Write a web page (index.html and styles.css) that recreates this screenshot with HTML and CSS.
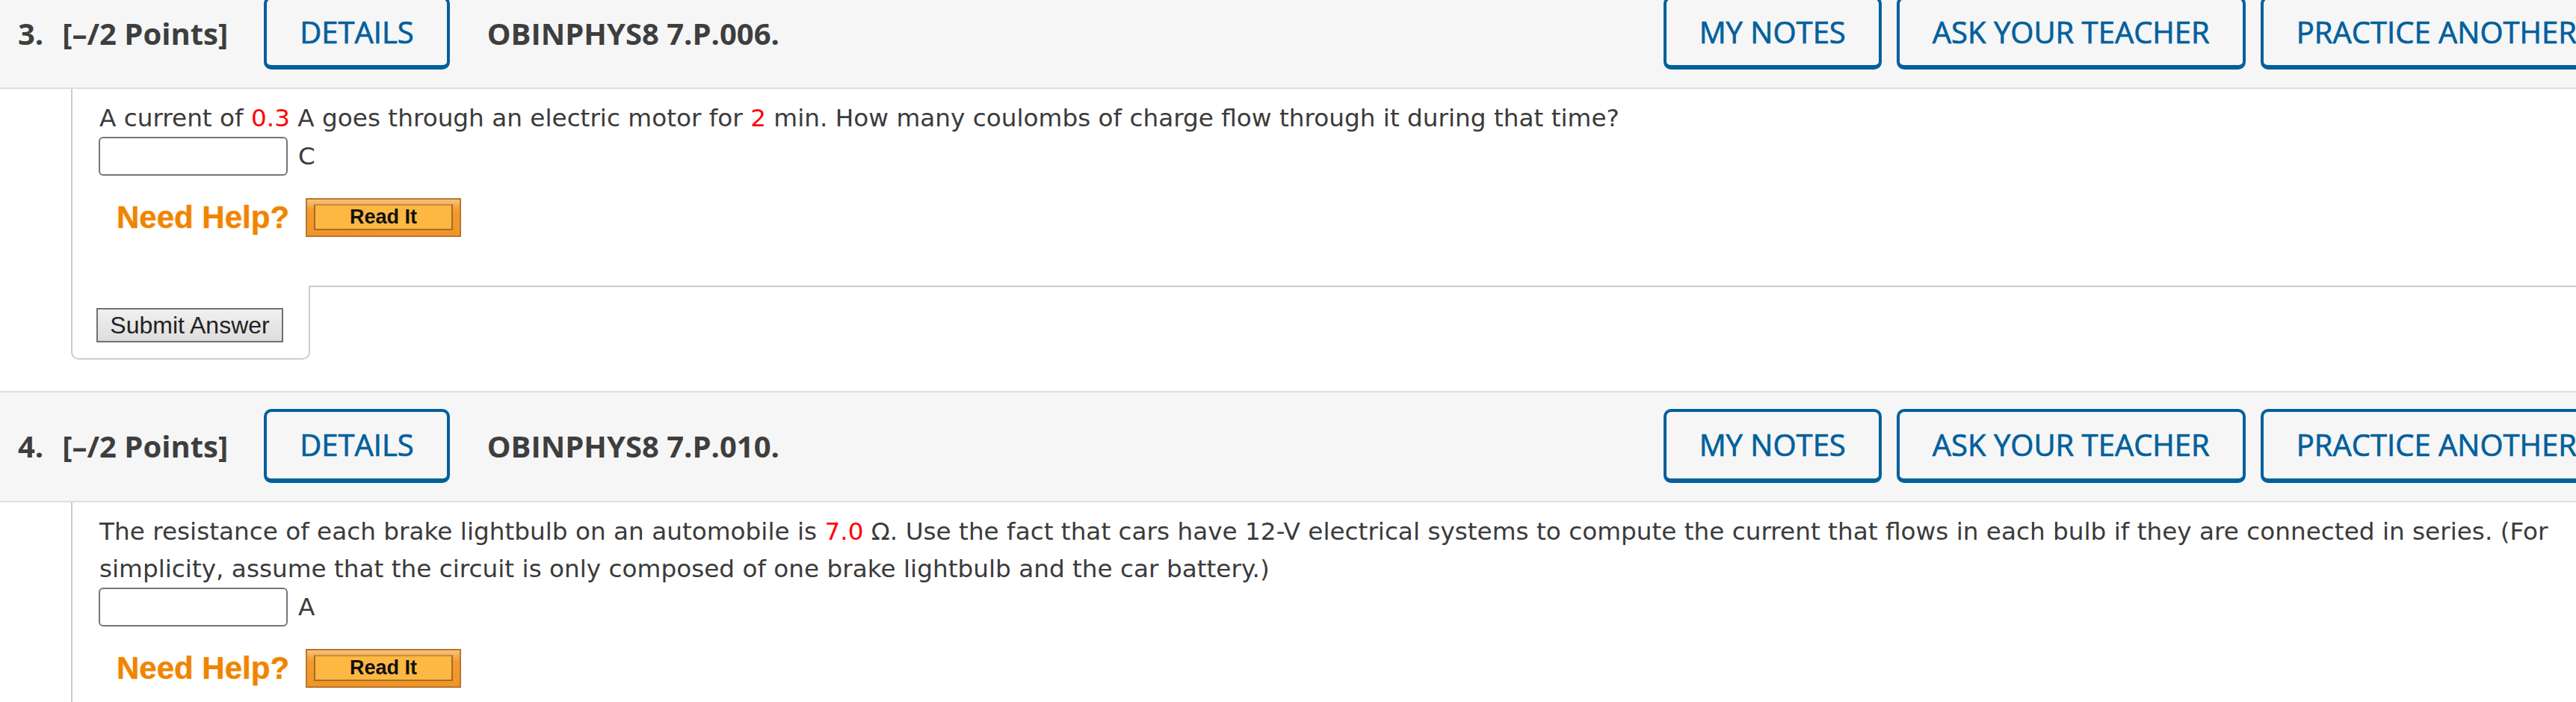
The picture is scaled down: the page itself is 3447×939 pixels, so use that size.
FILE: index.html
```html
<!DOCTYPE html>
<html>
<head>
<meta charset="utf-8">
<link rel="stylesheet" href="styles.css">
</head>
<body>
<div class="page">
  <section class="question">
    <div class="qhead">
      <span class="qnum">3.</span>
      <span class="pts">[–/2 Points]</span>
      <button class="hbtn">DETAILS</button>
      <span class="qid">OBINPHYS8 7.P.006.</span>
      <div class="actions">
        <button class="hbtn">MY NOTES</button>
        <button class="hbtn">ASK YOUR TEACHER</button>
        <button class="hbtn">PRACTICE ANOTHER</button>
      </div>
    </div>
    <div class="qbody">
      <p class="qtext">A current of <span class="val">0.3</span> A goes through an electric motor for <span class="val">2</span> min. How many coulombs of charge flow through it during that time?</p>
      <div class="answer"><input class="ans" type="text"><span class="unit">C</span></div>
      <div class="help"><span class="needhelp">Need Help?</span><button class="readit"><span class="readit-in">Read It</span></button></div>
    </div>
    <div class="qfoot">
      <div class="tab"><button class="submit">Submit Answer</button></div>
      <div class="fill"></div>
    </div>
  </section>

  <section class="question">
    <div class="qhead">
      <span class="qnum">4.</span>
      <span class="pts">[–/2 Points]</span>
      <button class="hbtn">DETAILS</button>
      <span class="qid">OBINPHYS8 7.P.010.</span>
      <div class="actions">
        <button class="hbtn">MY NOTES</button>
        <button class="hbtn">ASK YOUR TEACHER</button>
        <button class="hbtn">PRACTICE ANOTHER</button>
      </div>
    </div>
    <div class="qbody">
      <p class="qtext">The resistance of each brake lightbulb on an automobile is <span class="val">7.0</span> Ω. Use the fact that cars have 12-V electrical systems to compute the current that flows in each bulb if they are connected in series. (For simplicity, assume that the circuit is only composed of one brake lightbulb and the car battery.)</p>
      <div class="answer"><input class="ans" type="text"><span class="unit">A</span></div>
      <div class="help"><span class="needhelp">Need Help?</span><button class="readit"><span class="readit-in">Read It</span></button></div>
    </div>
    <div class="qfoot">
      <div class="tab"><button class="submit">Submit Answer</button></div>
      <div class="fill"></div>
    </div>
  </section>
</div>
</body>
</html>
```

FILE: styles.css
```css
html, body {
  margin: 0;
  padding: 0;
  background: #ffffff;
  overflow: hidden;
}

.page {
  width: 3520px;
  margin-top: -29px;
}

.question {
  margin-bottom: 42px;
}

.qhead {
  display: flex;
  align-items: center;
  background: #f6f6f6;
  border-top: 2px solid #dedede;
  border-bottom: 2px solid #dedede;
  padding: 22px 24px 24px 24px;
  font-family: "Open Sans", "DejaVu Sans", sans-serif;
  font-size: 40px;
  color: #3e3e3e;
}

.qnum {
  font-weight: 700;
  margin-right: 25px;
}

.pts {
  font-weight: 700;
  margin-right: 48px;
}

.qid {
  font-weight: 700;
  margin-left: 50px;
}

.hbtn {
  font-family: "Open Sans", "DejaVu Sans", sans-serif;
  font-size: 40px;
  font-weight: 400;
  -webkit-text-stroke: 0.7px #00609c;
  color: #00609c;
  background: transparent;
  border: 4px solid #00609c;
  border-bottom-width: 6px;
  border-radius: 10px;
  padding: 17px 44px 17px 44px;
  line-height: 1.362;
  white-space: nowrap;
}

.actions {
  display: flex;
  gap: 20px;
  margin-left: auto;
}

.qbody {
  margin-left: 95px;
  border-left: 2px solid #cccccc;
  border-right: 2px solid #cccccc;
  padding: 14px 36px 65px 36px;
  font-family: "DejaVu Sans", Verdana, sans-serif;
  font-size: 32.7px;
  line-height: 50px;
  color: #3b3b3b;
}

.qtext {
  margin: 0;
}

.val {
  color: #ff0000;
}

.answer {
  display: flex;
  align-items: baseline;
  gap: 14px;
  margin-left: -1px;
}

.ans {
  box-sizing: border-box;
  width: 253px;
  height: 52px;
  border: 2px solid #767676;
  border-radius: 6px;
  font-family: "DejaVu Sans", Verdana, sans-serif;
  font-size: 32.7px;
  padding: 0 8px;
  background: #fff;
}

.unit {
  line-height: normal;
}

.help {
  display: flex;
  align-items: center;
  gap: 22px;
  margin-top: 30px;
  padding-left: 23px;
  line-height: normal;
}

.needhelp {
  font-family: "Liberation Sans", Arial, sans-serif;
  font-weight: 700;
  font-size: 42px;
  color: #ef8400;
  text-shadow: 0 0 2px rgba(239, 132, 0, 0.6);
}

.readit {
  box-sizing: border-box;
  width: 208px;
  height: 52px;
  padding: 6px 9px 7px 9px;
  border: 2px solid #b8762e;
  background: linear-gradient(#f7c27a, #f39b2f 30%, #f09628);
  display: flex;
}

.readit-in {
  flex: 1;
  display: flex;
  align-items: center;
  justify-content: center;
  border: 2px solid #a96b26;
  border-top-color: #c98a3e;
  background: #fcb843;
  font-family: "Liberation Sans", Arial, sans-serif;
  font-weight: 700;
  font-size: 27px;
  color: #111;
}

.qfoot {
  display: flex;
  margin-left: 95px;
}

.tab {
  box-sizing: border-box;
  width: 320px;
  border: 2px solid #cccccc;
  border-top: none;
  border-radius: 0 0 10px 10px;
  padding: 30px 0 21px 32px;
}

.fill {
  flex: 1;
  border-top: 2px solid #cccccc;
}

.submit {
  box-sizing: border-box;
  width: 250px;
  height: 46px;
  border: 2px solid #707070;
  background: linear-gradient(#f0f0f0, #dddddd);
  font-family: "Liberation Sans", Arial, sans-serif;
  font-size: 32px;
  color: #222;
  padding: 0;
}
```
